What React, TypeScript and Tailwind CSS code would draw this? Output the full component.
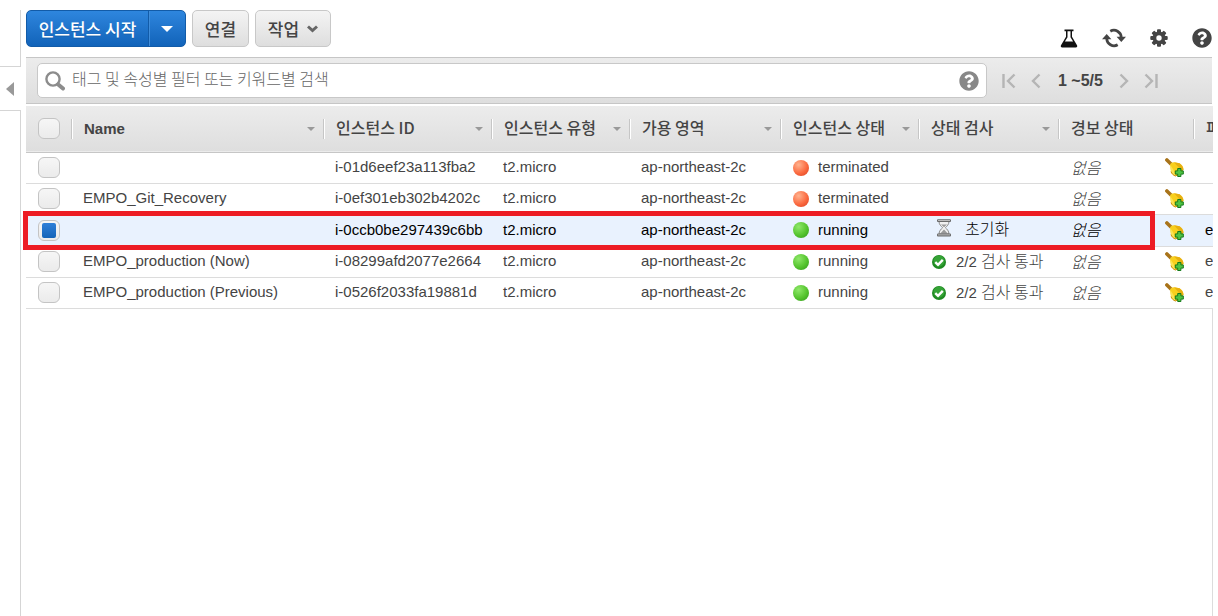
import React from 'react';
import { FaQuestionCircle } from 'react-icons/fa';

interface Instance {
  id: string;
  name: string;
  type: string;
  zone: string;
  state: 'terminated' | 'running';
  check: '' | 'init' | 'passed';
  dns: string;
}

const INSTANCES: Instance[] = [
  { id: 'i-01d6eef23a113fba2', name: '', type: 't2.micro', zone: 'ap-northeast-2c', state: 'terminated', check: '', dns: '' },
  { id: 'i-0ef301eb302b4202c', name: 'EMPO_Git_Recovery', type: 't2.micro', zone: 'ap-northeast-2c', state: 'terminated', check: '', dns: '' },
  { id: 'i-0ccb0be297439c6bb', name: '', type: 't2.micro', zone: 'ap-northeast-2c', state: 'running', check: 'init', dns: 'e' },
  { id: 'i-08299afd2077e2664', name: 'EMPO_production (Now)', type: 't2.micro', zone: 'ap-northeast-2c', state: 'running', check: 'passed', dns: 'e' },
  { id: 'i-0526f2033fa19881d', name: 'EMPO_production (Previous)', type: 't2.micro', zone: 'ap-northeast-2c', state: 'running', check: 'passed', dns: 'e' },
];

const COLUMNS = [
  { label: 'Name', width: 'w-[252px]', sortable: true },
  { label: '인스턴스 ID', width: 'w-[168px]', sortable: true },
  { label: '인스턴스 유형', width: 'w-[138px]', sortable: true },
  { label: '가용 영역', width: 'w-[151px]', sortable: true },
  { label: '인스턴스 상태', width: 'w-[138px]', sortable: true },
  { label: '상태 검사', width: 'w-[140px]', sortable: true },
  { label: '경보 상태', width: 'w-[135px]', sortable: false },
  { label: '퍼', width: '', sortable: false },
];

const KR = "font-['Noto_Sans_CJK_KR',sans-serif]";

function FlaskIcon() {
  return (
    <svg width="18" height="19" viewBox="0 0 18 19">
      <path d="M4.500 0.500h9v1.800h-1.500v5.400L17 16.200c.6 1.200.1 2.300-1.200 2.300H2.200C.9 18.500.4 17.400 1 16.200L6 7.700V2.300H4.500z" fill="#111" />
      <path d="M7.500 2.300h3v5.900l2.600 4.300H4.900l2.600-4.300z" fill="#fff" />
    </svg>
  );
}

function RefreshIcon() {
  return (
    <svg width="24" height="20" viewBox="0 0 24 20">
      <g fill="none" stroke="#444" strokeWidth="2.800">
        <path d="M8.300 3.200a7.300 7.300 0 0 1 10.900 6.300" />
        <path d="M15.700 16.800A7.300 7.300 0 0 1 4.800 10.500" />
      </g>
      <path d="M14.600 8.800H24l-4.700 5.200z" fill="#444" />
      <path d="M0 11.200h9.400L4.700 6z" fill="#444" />
    </svg>
  );
}

function GearIcon() {
  return (
    <svg width="18" height="18" viewBox="0 0 18 18">
      <g fill="#444">
        {[0, 45, 90, 135].map((deg) => (
          <rect key={deg} x="7" y="0.300" width="4" height="17.400" rx="1" transform={`rotate(${deg} 9 9)`} />
        ))}
        <circle cx="9" cy="9" r="6.500" />
      </g>
      <circle cx="9" cy="9" r="2.700" fill="#fff" />
    </svg>
  );
}

function SearchIcon() {
  return (
    <svg width="20" height="20" viewBox="0 0 20 20" fill="none" stroke="#8c8c8c" className="shrink-0">
      <circle cx="8" cy="8" r="6.600" strokeWidth="2.400" />
      <path d="M13.200 13.500l4.800 4" strokeWidth="4" strokeLinecap="round" />
    </svg>
  );
}

function StateDot({ state }: { state: Instance['state'] }) {
  return (
    <span
      className={`size-4 shrink-0 rounded-full ${
        state === 'running'
          ? 'bg-[radial-gradient(circle_at_35%_30%,#8fe86a,#55c42e_55%,#2f961a)]'
          : 'bg-[radial-gradient(circle_at_35%_30%,#ffb38f,#fb6a40_55%,#d83c1c)]'
      }`}
    />
  );
}

function CheckIcon() {
  return (
    <svg width="14" height="14" viewBox="0 0 14 14" className="shrink-0">
      <circle cx="7" cy="7" r="7" fill="#1f8a22" />
      <circle cx="7" cy="6" r="5.500" fill="#35a336" />
      <path d="M3.300 7.200l2.700 2.600 4.800-5" fill="none" stroke="#fff" strokeWidth="2.400" />
    </svg>
  );
}

function HourglassIcon() {
  return (
    <svg width="16" height="18" viewBox="0 0 16 18" className="shrink-0">
      <path d="M3 2.500h10c0 3-2.200 4.800-3.600 6.200C10.800 10 13 12 13 15H3c0-3 2.200-5 3.600-6.300C5.200 7.300 3 5.500 3 2.500z" fill="#f0f0f0" stroke="#888" strokeWidth="1" />
      <path d="M5 5.500h6L8 8.300zM8 10.500l4 4.300H4z" fill="#9a9a9a" />
      <rect x="1" y="0.300" width="14" height="2.600" rx="1" fill="#6a6a6a" />
      <rect x="1" y="14.600" width="14" height="3" rx="1" fill="#6a6a6a" />
      <path d="M2 1.500h12M2 15.900h12" stroke="#d0d0d0" strokeWidth="0.800" />
    </svg>
  );
}

function BellIcon() {
  return (
    <svg width="19" height="19" viewBox="0 0 19 19">
      <path d="M1.900 2l4.600 4.500" stroke="#a8731a" strokeWidth="3.600" strokeLinecap="round" />
      <path d="M5 6.500C6 5 7.500 4.200 9 4.300L14.500 5.300C16.500 6.500 18.300 9 18.500 11.500C17 14.500 13.500 17.600 10.500 18C8.500 17.500 6.500 15.500 6 13.500z" fill="#f8cf1c" />
      <path d="M9 4.300L14.500 5.300C16.500 6.500 18.300 9 18.500 11.500L17 13z" fill="#e8b010" />
      <path d="M5 6.500L6 13.500C6.500 15.500 8.500 17.500 10.500 18L8.500 12z" fill="#fbe354" />
      <path d="M6 13.500C6.500 15.500 8.500 17.500 10.500 18L12.500 17" fill="none" stroke="#c98d12" strokeWidth="1" />
      <path d="M12.700 10.500h3.200v2.400h2.400v3.200h-2.400v2.400h-3.200v-2.400h-2.400v-3.200h2.400z" fill="#4fc443" stroke="#14791a" strokeWidth="1" />
    </svg>
  );
}

function Caret({ fill = '#999', size = 8 }: { fill?: string; size?: number }) {
  return (
    <svg width={size} height={size / 2} viewBox="0 0 8 4" className="shrink-0">
      <path d="M0 0h8L4 4z" fill={fill} />
    </svg>
  );
}

function PageButton({ label, d }: { label: string; d: string }) {
  return (
    <button type="button" aria-label={label} className="cursor-pointer">
      <svg width="14" height="16" viewBox="0 0 14 16" fill="none" stroke="#b5b5b5" strokeWidth="2.400">
        <path d={d} />
      </svg>
    </button>
  );
}

function TickBox({ label, checked, onChange }: { label: string; checked: boolean; onChange: () => void }) {
  return (
    <input
      type="checkbox"
      aria-label={label}
      checked={checked}
      onChange={onChange}
      className="grid h-[21px] w-[22px] appearance-none place-items-center rounded-md border border-[#c4c4c4] bg-linear-to-b from-[#f6f6f6] to-[#ebebeb] checked:before:h-[15px] checked:before:w-[14px] checked:before:rounded-xs checked:before:bg-linear-to-b checked:before:from-[#2f80d8] checked:before:to-[#1464b8] checked:before:content-['']"
    />
  );
}

export default function App() {
  const [selected, setSelected] = React.useState<string[]>(['i-0ccb0be297439c6bb']);
  const [query, setQuery] = React.useState('');

  const toggle = (id: string) => {
    setSelected((prev) => (prev.includes(id) ? prev.filter((s) => s !== id) : [...prev, id]));
  };

  const allSelected = selected.length === INSTANCES.length;
  const greyButton =
    'h-[37px] rounded-[5px] border border-[#c8c8c8] bg-linear-to-b from-[#f4f4f4] to-[#dedede] text-[17px] font-medium text-[#444]';

  return (
    <div className="flex min-h-screen bg-white font-['Liberation_Sans','Noto_Sans_CJK_KR',sans-serif] text-[15px] text-[#444]">

      {/* Collapsed navigation strip */}
      <aside className="flex w-[21px] shrink-0 flex-col pt-[10px]">
        <div className="h-14 border-r border-[#d5d5d5]" />
        <button type="button" aria-label="사이드바 열기" className="flex h-[45px] items-center border-y border-[#d5d5d5] pl-[6px]">
          <svg width="8" height="14" viewBox="0 0 8 14">
            <path d="M8 0v14L0 7z" fill="#999" />
          </svg>
        </button>
        <div className="flex-1 border-r border-[#d5d5d5]" />
      </aside>

      <main className="mr-[5px] flex min-w-0 flex-1 flex-col overflow-hidden pl-[5px]">

        {/* Actions */}
        <div className={`flex h-[57px] items-start justify-between pt-[10px] pr-px ${KR}`}>
          <div className="flex gap-[6px]">
            <div className="flex h-[37px] w-40 overflow-hidden rounded-[5px] border border-[#125ba8] bg-linear-to-b from-[#2e86de] to-[#1163b9]">
              <button type="button" className="flex-1 text-[17px] font-medium text-white text-shadow-2xs">
                인스턴스 시작
              </button>
              <button type="button" aria-label="시작 옵션" className="flex w-[37px] items-center justify-center border-l border-[#125ba8] shadow-[inset_1px_0_#3f8ddb]">
                <Caret fill="#fff" size={12} />
              </button>
            </div>
            <button type="button" className={`w-[57px] ${greyButton}`}>연결</button>
            <button type="button" className={`flex w-[76px] items-center justify-center gap-2 ${greyButton}`}>
              작업
              <svg width="11" height="8" viewBox="0 0 11 8" fill="none" stroke="#666" strokeWidth="3">
                <path d="M1 1.500l4.500 4 4.500-4" />
              </svg>
            </button>
          </div>
          <div className="flex items-center gap-6 pt-[18px]">
            <button type="button" aria-label="실험"><FlaskIcon /></button>
            <button type="button" aria-label="새로 고침"><RefreshIcon /></button>
            <button type="button" aria-label="설정"><GearIcon /></button>
            <button type="button" aria-label="도움말"><FaQuestionCircle className="size-5 text-[#444]" /></button>
          </div>
        </div>

        {/* Filter bar */}
        <div className="mr-px flex h-[47px] items-center border-y border-[#c6c6c6] bg-linear-to-b from-[#ececec] to-[#dedede] pl-[11px]">
          <div className="flex h-[35px] flex-1 items-center gap-[7px] rounded-[5px] border border-[#c8c8c8] bg-white px-[7px]">
            <SearchIcon />
            <input
              type="text"
              aria-label="검색"
              value={query}
              onChange={(e) => setQuery(e.target.value)}
              placeholder="태그 및 속성별 필터 또는 키워드별 검색"
              className={`h-8 min-w-0 flex-1 pb-[6px] text-base font-light text-[#444] outline-none placeholder:text-[#666] ${KR}`}
            />
            <button type="button" aria-label="검색 도움말"><FaQuestionCircle className="size-5 text-[#888]" /></button>
          </div>
          <div className="flex w-[225px] items-center gap-[14px] pl-[15px]">
            <PageButton label="처음" d="M1.500 1v14M12.500 1.500L6 8l6.500 6.500" />
            <PageButton label="이전" d="M9.500 1.500L3 8l6.500 6.500" />
            <span className="w-11 text-center text-base font-bold whitespace-nowrap">1 ~5/5</span>
            <PageButton label="다음" d="M4.500 1.500L11 8l-6.500 6.500" />
            <PageButton label="마지막" d="M1.500 1.500L8 8l-6.500 6.500M12.500 1v14" />
          </div>
        </div>

        {/* Instance list */}
        <table className="mt-[2px] w-full table-fixed border-collapse text-left">
          <thead>
            <tr className="h-[46px] border-b border-[#c6c6c6] bg-linear-to-b from-[#ececec] to-[#dedede]">
              <th className="w-[46px] p-0">
                <div className="flex h-5 items-center border-r border-[#c6c6c6] pl-3 shadow-[1px_0_#fff]">
                  <TickBox
                    label="모두 선택"
                    checked={allSelected}
                    onChange={() => setSelected(allSelected ? [] : INSTANCES.map((i) => i.id))}
                  />
                </div>
              </th>
              {COLUMNS.map((col, idx) => (
                <th key={col.label} className={`p-0 ${col.width}`}>
                  <div
                    className={`flex h-5 items-center justify-between pr-2 pl-3 whitespace-nowrap ${
                      idx < COLUMNS.length - 1 ? 'border-r border-[#c6c6c6] shadow-[1px_0_#fff]' : ''
                    } ${idx === 0 ? 'font-bold' : `text-base font-medium ${KR}`}`}
                  >
                    <span className={idx === 0 ? '' : 'pb-1'}>{col.label}</span>
                    {col.sortable && <Caret />}
                  </div>
                </th>
              ))}
            </tr>
          </thead>
          <tbody>
            {INSTANCES.map((inst) => {
              const isSelected = selected.includes(inst.id);
              return (
                <tr
                  key={inst.id}
                  className={`relative border-b border-[#dcdcdc] whitespace-nowrap ${
                    isSelected ? 'h-8 bg-[#e9f2fe] text-black' : 'h-[31px]'
                  }`}
                >
                  <td className="p-0 pl-3">
                    <TickBox label={inst.id} checked={isSelected} onChange={() => toggle(inst.id)} />
                    {isSelected && (
                      <div className="pointer-events-none absolute -top-[3px] -left-[3px] z-10 h-[39px] w-[1132px] border-[5px] border-[#ed1c24]" />
                    )}
                  </td>
                  <td className="p-0 pl-[11px]">{inst.name}</td>
                  <td className="p-0 pl-[11px]">{inst.id}</td>
                  <td className="p-0 pl-[11px]">{inst.type}</td>
                  <td className="p-0 pl-[11px]">{inst.zone}</td>
                  <td className="p-0 pl-3">
                    <div className="flex items-center gap-[9px]">
                      <StateDot state={inst.state} />
                      {inst.state}
                    </div>
                  </td>
                  <td className="p-0 pl-[13px]">
                    {inst.check === 'passed' && (
                      <div className="flex h-5 items-center gap-[10px]">
                        <CheckIcon />
                        <span className="pb-[2px]">2/2 <span className={`text-base font-light ${KR}`}>검사 통과</span></span>
                      </div>
                    )}
                    {inst.check === 'init' && (
                      <div className={`flex h-5 items-center gap-[13px] pb-1 pl-1 text-base font-light ${KR}`}>
                        <HourglassIcon />
                        초기화
                      </div>
                    )}
                  </td>
                  <td className="p-0 pr-[10px] pl-3">
                    <div className="flex h-5 items-center justify-between">
                      <em className={`pb-[2px] text-base font-light ${KR}`}>없음</em>
                      <button type="button" aria-label="경보 추가"><BellIcon /></button>
                    </div>
                  </td>
                  <td className="p-0 pl-[11px]">{inst.dns}</td>
                </tr>
              );
            })}
          </tbody>
        </table>
        <div className="flex-1 border-r border-[#dcdcdc]" />
      </main>
    </div>
  );
}
